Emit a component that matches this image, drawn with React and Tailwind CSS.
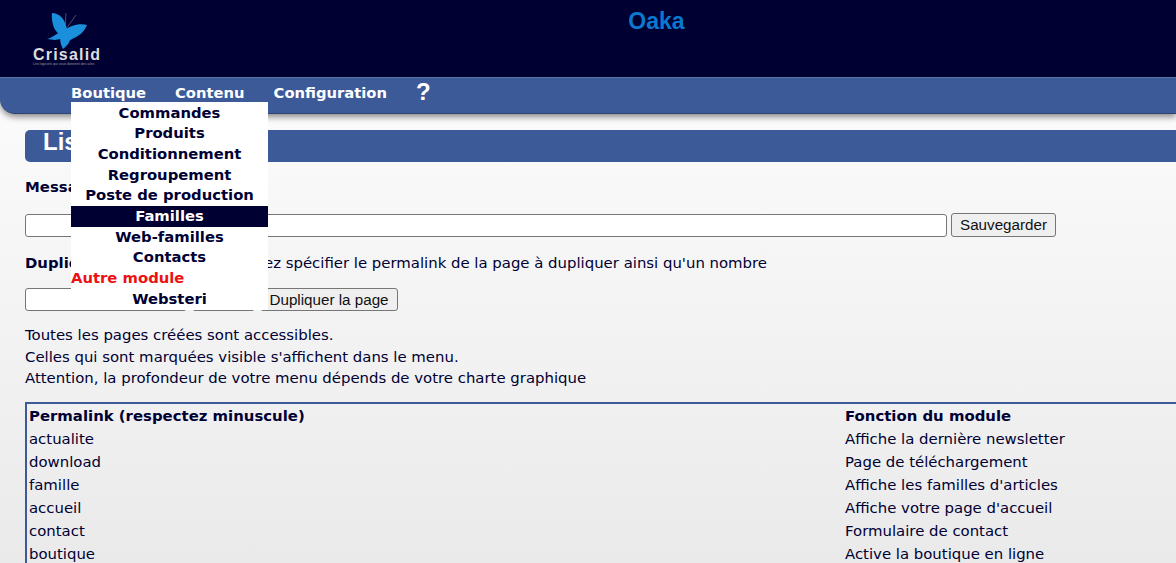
import React from 'react';

const menuItems = ['Commandes', 'Produits', 'Conditionnement', 'Regroupement', 'Poste de production', 'Familles', 'Web-familles', 'Contacts', 'Autre module', 'Websteri'];

const modules = [
    ['actualite', 'Affiche la dernière newsletter'],
    ['download', 'Page de téléchargement'],
    ['famille', "Affiche les familles d'articles"],
    ['accueil', "Affiche votre page d'accueil"],
    ['contact', 'Formulaire de contact'],
    ['boutique', 'Active la boutique en ligne'],
];

function Logo() {
    return (
        <div className="w-[70px] flex flex-col items-start">
            <svg className="ml-[14px]" width="41" height="38" viewBox="0 0 41 38">
                <path d="M18 17 L19 1 M19 17 L29 3" stroke="#55657a" strokeWidth="0.8" fill="none" />
                <path d="M5 1 C12 1 19 7 20 19 L16 24 C8 22 4 12 5 1 Z" fill="#1a8fdc" />
                <path d="M18 18 C23 14 31 11 40 13 C37 20 32 24 27 26 L20 30 Z" fill="#1a8fdc" />
                <path d="M0 27 C5 26 9 22 15 19 L18 26 L8 28 Z" fill="#1a8fdc" />
                <path d="M13 26 C13 31 15 35 16 37 C20 34 23 30 23 27 L18 18 Z" fill="#1a8fdc" />
            </svg>
            <span className="-mt-[2px] font-['Liberation_Sans',sans-serif] font-bold text-[16px] leading-[14px] tracking-[1.2px] text-[#dddddd]">Crisalid</span>
            <span className="font-['Liberation_Sans',sans-serif] text-[3.5px] leading-[4px] text-[#999999] whitespace-nowrap">Les logiciels qui vous donnent des ailes</span>
        </div>
    );
}

export default function App() {
    return (
        <div className="relative h-[563px] overflow-hidden font-['DejaVu_Sans',sans-serif] text-[14.9px] text-[#000033] bg-gradient-to-b from-white to-[#eaeaea]">
            <header className="h-[77px] bg-[#000033] flex">
                <div className="pl-[33px] pt-[12px]">
                    <Logo />
                </div>
                <h1 className="flex-1 text-center pt-[7px] pl-[34px] font-['Liberation_Sans',sans-serif] font-bold text-[23px] leading-[28px] text-[#0b78d0]">Oaka</h1>
            </header>

            <nav className="h-[37px] bg-[#3c5a98] border-t border-[#5a74a8] border-b-[#2d4373] border-b rounded-bl-[15px] shadow-[0_3px_6px_rgba(0,0,0,0.45)] flex items-start pl-[71px] pt-[5px] font-bold text-[14.75px] leading-[20px] text-white gap-[29px]">
                <span>Boutique</span>
                <span>Contenu</span>
                <span>Configuration</span>
                <span className="font-['Liberation_Sans',sans-serif] text-[24px] leading-[18px]">?</span>
            </nav>

            <main className="pl-[25px] pt-[16px]">
                <div className="h-[32px] bg-[#3c5a98] rounded-l-[5px] pl-[18px] font-['Liberation_Sans',sans-serif] font-bold text-[24px] leading-[24px] text-white">Liste des pages</div>

                <p className="mt-[15px] font-bold leading-[20px]">Message de la page</p>
                <div className="mt-[16px] flex items-center gap-[4px]">
                    <input className="w-[922px] h-[23px] bg-white border border-[#767676] rounded-[3px]" />
                    <button className="h-[24px] w-[105px] bg-[#efefef] border border-[#767676] rounded-[3px] font-['Liberation_Sans',sans-serif] text-[15.2px] text-[#111111]">Sauvegarder</button>
                </div>

                <p className="mt-[16px] leading-[20px]"><b>Dupliquer</b> une page : vous devez spécifier le permalink de la page à dupliquer ainsi qu'un nombre</p>
                <div className="mt-[15px] flex items-center gap-[5px]">
                    <input className="w-[162px] h-[23px] bg-white border border-[#767676] rounded-[3px]" />
                    <input className="w-[63px] h-[23px] bg-white border border-[#767676] rounded-[3px]" />
                    <button className="h-[23px] w-[138px] bg-[#efefef] border border-[#767676] rounded-[3px] font-['Liberation_Sans',sans-serif] text-[15.2px] text-[#111111]">Dupliquer la page</button>
                </div>

                <div className="mt-[14px] leading-[21.5px]">
                    <p>Toutes les pages créées sont accessibles.</p>
                    <p>Celles qui sont marquées visible s'affichent dans le menu.</p>
                    <p>Attention, la profondeur de votre menu dépends de votre charte graphique</p>
                </div>

                <div className="mt-[12px] border-2 border-r-0 border-[#3c5a98] pl-[2px] pt-[1px] pb-[40px] leading-[23px]">
                    <div className="flex font-bold">
                        <span className="w-[816px]">Permalink (respectez minuscule)</span>
                        <span>Fonction du module</span>
                    </div>
                    {modules.map(([permalink, fonction]) => (
                        <div key={permalink} className="flex">
                            <span className="w-[816px]">{permalink}</span>
                            <span>{fonction}</span>
                        </div>
                    ))}
                </div>
            </main>

            <div className="absolute left-[71px] top-[102px] w-[197px] h-[208px] pt-[0.5px] bg-white font-bold text-[14.8px] leading-[20.7px] text-center">
                {menuItems.map((item) => {
                    if (item === 'Familles') {
                        return <div key={item} className="bg-[#000033] text-white">{item}</div>;
                    }
                    if (item === 'Autre module') {
                        return <div key={item} className="text-left text-[#ee1111]">{item}</div>;
                    }
                    return <div key={item}>{item}</div>;
                })}
            </div>
        </div>
    );
}
